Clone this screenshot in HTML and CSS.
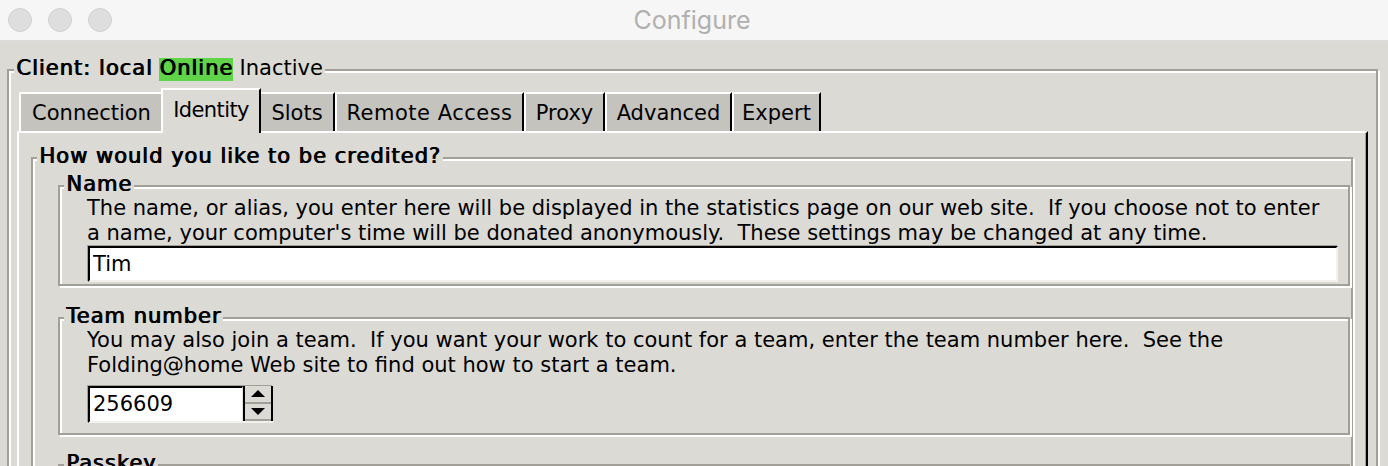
FILE: index.html
```html
<!DOCTYPE html>
<html lang="en">
<head>
<meta charset="utf-8">
<title>Configure</title>
<link rel="stylesheet" href="styles.css">
</head>
<body>
<header class="titlebar">
  <div class="lights">
    <span class="light"></span>
    <span class="light"></span>
    <span class="light"></span>
  </div>
  <div class="title">Configure</div>
</header>
<main class="window">
  <section class="group client">
    <div class="legend legend-client"><span class="bold">Client: local</span> <span class="bold online">Online</span> Inactive</div>
    <div class="frame client-frame">
      <div class="notebook">
        <div class="tabs">
          <div class="tab tab-connection">Connection</div>
          <div class="tab tab-identity selected">Identity</div>
          <div class="tab tab-slots">Slots</div>
          <div class="tab tab-remote">Remote Access</div>
          <div class="tab tab-proxy">Proxy</div>
          <div class="tab tab-advanced">Advanced</div>
          <div class="tab tab-expert">Expert</div>
        </div>
        <div class="pane">
          <section class="group how">
            <div class="legend bold legend-how">How would you like to be credited?</div>
            <div class="frame how-frame">
              <section class="group sub name">
                <div class="legend bold">Name</div>
                <div class="frame sub-frame name-frame">
                  <p class="desc">The name, or alias, you enter here will be displayed in the statistics page on our web site.&nbsp; If you choose not to enter<br>a name, your computer's time will be donated anonymously.&nbsp; These settings may be changed at any time.</p>
                  <input class="entry" type="text" value="Tim">
                </div>
              </section>
              <section class="group sub team">
                <div class="legend bold">Team number</div>
                <div class="frame sub-frame team-frame">
                  <p class="desc">You may also join a team.&nbsp; If you want your work to count for a team, enter the team number here.&nbsp; See the<br>Folding@home Web site to find out how to start a team.</p>
                  <div class="spin">
                    <div class="spin-field">256609</div>
                    <div class="spin-buttons">
                      <div class="spin-btn up"><svg width="14" height="7" viewBox="0 0 14 7"><polygon points="0,7 7,0 14,7" fill="#000"/></svg></div>
                      <div class="spin-btn down"><svg width="14" height="7" viewBox="0 0 14 7"><polygon points="0,0 14,0 7,7" fill="#000"/></svg></div>
                    </div>
                  </div>
                </div>
              </section>
              <section class="group sub passkey">
                <div class="legend bold">Passkey</div>
                <div class="frame sub-frame passkey-frame">
                  <p class="desc">Your passkey is a unique identifier that ties your contributions directly to you.</p>
                </div>
              </section>
            </div>
          </section>
        </div>
      </div>
    </div>
  </section>
</main>
</body>
</html>
```

FILE: styles.css
```css
:root {
  --bg: #dcdad5;
  --dark: #a19f97;
  --tab: #c5c3be;
  --light: #f2f1ee;
}

html, body {
  height: 100%;
  overflow: hidden;
}

body {
  margin: 0;
  background: var(--bg);
  color: #000;
  font-family: "DejaVu Sans", sans-serif;
  font-size: 21px;
}

/* ---------- title bar ---------- */
.titlebar {
  height: 40px;
  background: #f6f6f6;
  border-bottom: 1px solid #dcdcdc;
  display: grid;
  align-items: center;
}
.titlebar > * {
  grid-area: 1 / 1;
}
.lights {
  justify-self: start;
  display: flex;
  gap: 16px;
  padding-left: 8px;
}
.light {
  width: 22px;
  height: 22px;
  border-radius: 50%;
  background: #dedede;
  border: 1px solid #d1d1d1;
}
.title {
  justify-self: center;
  font-family: Inter, "Noto Sans", sans-serif;
  font-size: 25px;
  color: #b0b0b0;
  margin-right: 4px;
}

/* ---------- window ---------- */
.window {
  padding: 15px 10px 0 7px;
}

.group {
  display: flex;
  flex-direction: column;
}
.legend {
  align-self: flex-start;
  position: relative;
  margin: 0 0 -10px 6px;
  padding: 1px 2px 0;
  line-height: 22px;
  background: var(--bg);
  white-space: nowrap;
}
.bold {
  letter-spacing: 1px;
  text-shadow: 1px 0 0 currentColor;
}
.frame {
  border: 2px solid var(--dark);
  box-shadow: inset 2px 2px 0 #fff, 2px 2px 0 #fff;
}

/* client */
.legend-client {
  margin-left: 7px;
  margin-bottom: -12px;
}
.online {
  display: inline-block;
  line-height: 20px;
  padding-bottom: 3px;
  background: #5fd449;
}
.client-frame {
  padding: 17px 8px 0 8px;
}

/* ---------- notebook ---------- */
.tabs {
  display: flex;
  align-items: flex-end;
  margin-left: 2px;
}
.tab {
  box-sizing: border-box;
  height: 39px;
  padding-top: 7px;
  line-height: 25px;
  text-align: center;
  background: var(--tab);
  border-top: 2px solid #fff;
  border-left: 2px solid #fff;
  border-right: 2px solid #000;
  white-space: nowrap;
}
.tab-connection { width: 144px; padding-left: 1px; }
.tab-identity { width: 96px; letter-spacing: -0.6px; }
.tab-slots { width: 76px; }
.tab-remote { width: 189px; letter-spacing: 0.5px; }
.tab-proxy { width: 81px; }
.tab-advanced { width: 127px; }
.tab-expert { width: 89px; }

.tab.selected {
  position: relative;
  width: 100px;
  height: 45px;
  margin: 0 -2px -2px;
  padding-top: 8px;
  background: var(--bg);
}
.pane {
  border-top: 2px solid #fff;
  border-left: 2px solid #fff;
  border-right: 2px solid #000;
  box-shadow: inset -1px 0 0 var(--dark);
  padding: 11px 13px 0 12px;
  min-height: 400px;
}

/* ---------- group boxes ---------- */
.how-frame {
  padding: 13px 1px 0 25px;
}
.sub + .sub {
  margin-top: 18px;
}
.team + .passkey {
  margin-top: 16px;
}
.sub-frame {
  padding: 9px 10px 2px 27px;
}
.team-frame {
  padding-bottom: 10px;
}
.desc {
  margin: 0;
  line-height: 25px;
  white-space: nowrap;
}

.entry {
  display: block;
  box-sizing: border-box;
  width: calc(100% - 1px);
  height: 36px;
  margin: 0 0 0 1px;
  padding: 1px 3px 2px;
  border: 2px solid;
  border-color: #000 var(--light) var(--light) #000;
  box-shadow: -1px -1px 0 var(--dark);
  background: #fff;
  font: inherit;
  line-height: 29px;
  color: #000;
  outline: none;
}

.spin {
  display: flex;
  box-sizing: border-box;
  width: 185px;
  height: 37px;
  margin: 8px 0 0 1px;
  border-left: 2px solid #000;
  border-bottom: 2px solid var(--light);
  box-shadow: -1px -1px 0 var(--dark);
}
.spin-field {
  flex: 1;
  border-top: 2px solid #000;
  border-right: 1px solid #e2e0dc;
  background: #fff;
  padding-left: 3px;
  line-height: 33px;
}
.spin-buttons {
  box-sizing: border-box;
  width: 30px;
  display: flex;
  flex-direction: column;
  border-left: 2px solid #000;
  border-right: 2px solid #000;
}
.spin-btn {
  flex: 1;
  display: flex;
  align-items: center;
  justify-content: center;
  border-bottom: 2px solid var(--dark);
}
.spin-btn svg {
  display: block;
}
```
